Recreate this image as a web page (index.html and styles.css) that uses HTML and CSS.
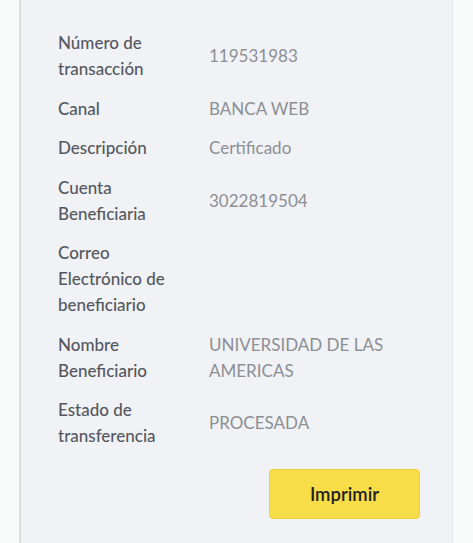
FILE: index.html
```html
<!DOCTYPE html>
<html lang="es">
<head>
    <meta charset="UTF-8">
    <meta name="viewport" content="width=device-width, initial-scale=1.0">
    <title>Detalle de transferencia</title>
    <link rel="stylesheet" href="styles.css">
</head>
<body>
    <div class="card">
        <dl class="details">
            <dt>Número de transacción</dt>
            <dd>119531983</dd>

            <dt>Canal</dt>
            <dd>BANCA WEB</dd>

            <dt>Descripción</dt>
            <dd>Certificado</dd>

            <dt>Cuenta Beneficiaria</dt>
            <dd>3022819504</dd>

            <dt>Correo Electrónico de beneficiario</dt>
            <dd></dd>

            <dt>Nombre Beneficiario</dt>
            <dd>UNIVERSIDAD DE LAS AMERICAS</dd>

            <dt>Estado de transferencia</dt>
            <dd>PROCESADA</dd>
        </dl>

        <div class="actions">
            <button class="btn-print" onclick="window.print()">Imprimir</button>
        </div>
    </div>
</body>
</html>
```

FILE: styles.css
```css
body {
    margin: 0;
    padding: 0;
    background-color: #f9fafa;
    font-family: Lato, "Open Sans", sans-serif;
    overflow: hidden;
}

.card {
    margin: 0 20px 0 19px;
    padding: 30px 32px 60px 37px;
    background-color: #f1f2f6;
    border-left: 2px solid #dcdddf;
    border-right: 1px solid #e6e7ea;
    min-height: 600px;
    box-sizing: border-box;
}

.details {
    display: grid;
    grid-template-columns: 151px 1fr;
    row-gap: 13.5px;
    margin: 0;
}

.details dt,
.details dd {
    margin: 0;
    font-size: 17px;
    line-height: 26px;
    display: flex;
    align-items: center;
}

.details dt {
    color: #54585e;
    font-weight: 500;
    max-width: 128px;
}

.details dd {
    color: #8c8f94;
}

.actions {
    display: flex;
    justify-content: flex-end;
    margin-top: 20px;
}

.btn-print {
    width: 151px;
    height: 50px;
    font-family: inherit;
    font-size: 18.5px;
    font-weight: 600;
    color: #1f2124;
    background-color: #f7dd48;
    border: 1px solid #ecd33e;
    border-radius: 4px;
    cursor: pointer;
}
```
